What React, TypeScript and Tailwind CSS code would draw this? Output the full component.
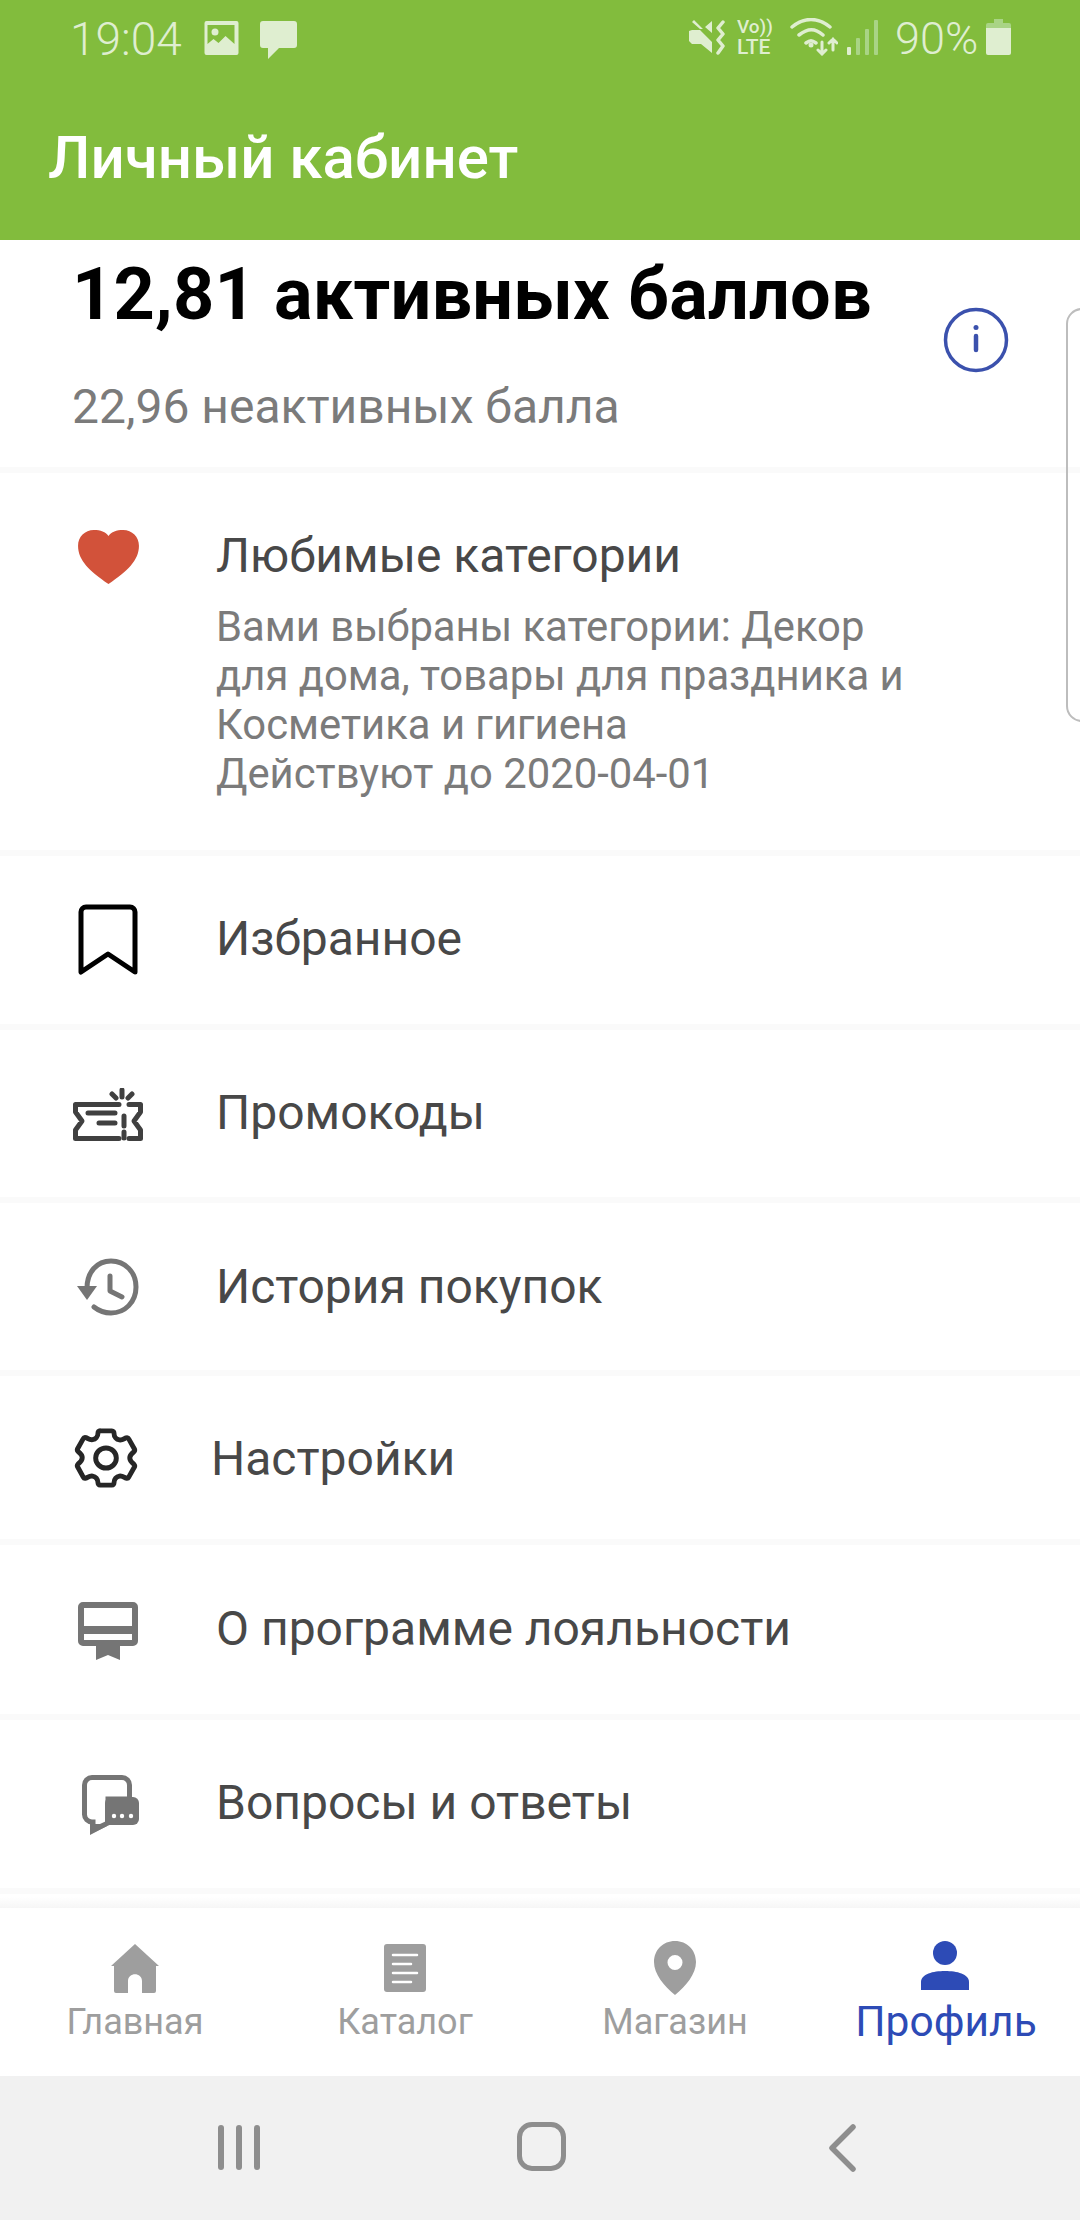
import React from 'react';

const F = '[font-family:Roboto,sans-serif]';

function Row({ icon, label, h, gap = 'pl-[216px]', text = '' }: { icon: React.ReactNode; label: string; h: string; gap?: string; text?: string }) {
  return (
    <div className={`relative flex items-center ${h} border-b-[6px] border-[#fafafa] ${gap}`}>
      <div className="absolute left-[70px] top-0 bottom-0 w-[76px] flex items-center justify-center">{icon}</div>
      <span className={`text-[48px] leading-none text-[#484848] ${text}`}>{label}</span>
    </div>
  );
}

function Tab({ label, icon, active }: { label: string; icon: React.ReactNode; active?: boolean }) {
  return (
    <div className="flex flex-col items-center pt-[36px]">
      <div className="h-[50px] flex items-center justify-center">{icon}</div>
      <div className={active ? 'mt-[4px] ml-[2px] text-[42.500px] leading-[48px] text-[#2d4bb6]' : 'mt-[5px] text-[36px] leading-[46px] text-[#9e9e9e]'}>{label}</div>
    </div>
  );
}

export default function App() {
  return (
    <div className={`relative w-[1080px] h-[2220px] bg-white overflow-hidden flex flex-col ${F}`}>
      <header className="h-[240px] bg-[#82bc3d] shrink-0 flex flex-col">
        <div className="h-[80px] relative text-[#dfeed0]">
          <span className="absolute left-[70px] top-[14px] text-[46px] leading-[50px] font-light">19:04</span>
          <svg className="absolute left-[204px] top-[21px]" width="35" height="34" viewBox="0 0 34 34">
            <path fillRule="evenodd" fill="#dfeed0" d="M2 0h30a2 2 0 0 1 2 2v30a2 2 0 0 1-2 2H2a2 2 0 0 1-2-2V2a2 2 0 0 1 2-2zM3 4v19l6-5 5 4 7-7 9 8V4z" />
            <circle cx="10.5" cy="11" r="3.5" fill="#dfeed0" />
          </svg>
          <svg className="absolute left-[260px] top-[21px]" width="37" height="38" viewBox="0 0 37 38">
            <path fill="#dfeed0" d="M3 0h31a3 3 0 0 1 3 3v21a3 3 0 0 1-3 3H19L8 38V27H3a3 3 0 0 1-3-3V3a3 3 0 0 1 3-3z" />
          </svg>
          <svg className="absolute left-[689px] top-[20px]" width="37" height="35" viewBox="0 0 37 35">
            <path fill="#dfeed0" d="M0 11l3-1h8l12 12v11l-11-9H3l-3-3zM3 2l2-2 9 9-3 0zM16 7l7-6v12z" />
            <path fill="none" stroke="#dfeed0" strokeWidth="3.500" strokeLinecap="round" strokeLinejoin="round" d="M34 2l-5 6 5 6-5 6 5 6-5 7" />
          </svg>
          <span className="absolute left-[737px] top-[17px] text-[19px] leading-[20px] font-medium">Vo))</span>
          <span className="absolute left-[737px] top-[36px] text-[21px] leading-[22px] font-medium">LTE</span>
          <svg className="absolute left-[790px] top-[18px]" width="48" height="38" viewBox="0 0 48 38" fill="none" stroke="#dfeed0" strokeWidth="3.500" strokeLinecap="round">
            <path d="M2 9C14-1 28-1 40 9M9 17c9-7 16-7 24 0M16 25c4-3 6-3 10 0" />
            <circle cx="21" cy="27" r="1.500" fill="#dfeed0" strokeWidth="2" />
            <path strokeWidth="3" d="M32 24v12M28 32l4 4 4-4M43 32V21M39 25l4-4 4 4" />
          </svg>
          <svg className="absolute left-[847px] top-[20px]" width="32" height="36" viewBox="0 0 32 36" fill="#a9d485">
            <rect x="0" y="27" width="4" height="8" rx="1" fill="#dfeed0" />
            <rect x="9" y="18" width="4" height="17" rx="1" />
            <rect x="18" y="9" width="4" height="26" rx="1" />
            <rect x="27" y="0" width="4" height="35" rx="1" />
          </svg>
          <span className="absolute left-[895px] top-[14px] text-[45px] leading-[50px] font-light">90%</span>
          <svg className="absolute left-[986px] top-[19px]" width="25" height="36" viewBox="0 0 25 36">
            <path fill="#a9d485" d="M8 0h9v4h6a2 2 0 0 1 2 2v4H0V6a2 2 0 0 1 2-2h6z" />
            <path fill="#dfeed0" d="M0 9h25v25a2 2 0 0 1-2 2H2a2 2 0 0 1-2-2z" />
          </svg>
        </div>
        <div className="pl-[48px] pt-[46px] text-[60px] leading-[64px] font-medium text-white">Личный кабинет</div>
      </header>

      <main className="flex-1 flex flex-col relative overflow-hidden">
        <section className="relative h-[233px] border-b-[6px] border-[#fafafa]">
          <div className="pl-[72px] pt-[15px] text-[72px] leading-[80px] font-bold text-black tracking-[0.2px]">12,81 активных баллов</div>
          <div className="pl-[72px] pt-[46px] text-[48px] leading-[52px] text-[#7b7b7b]">22,96 неактивных балла</div>
          <svg className="absolute left-[942px] top-[66px]" width="68" height="68" viewBox="0 0 68 68" fill="none" stroke="#3b51ad">
            <circle cx="34" cy="34" r="30.500" strokeWidth="3.500" />
            <circle cx="34" cy="21.500" r="2.500" fill="#3b51ad" stroke="none" />
            <path d="M34 30v14" strokeWidth="4.500" strokeLinecap="round" />
          </svg>
        </section>

        <section className="relative h-[383px] border-b-[6px] border-[#fafafa] pl-[216px] pt-[57px]">
          <svg className="absolute left-[78px] top-[57px]" width="61" height="55" viewBox="0 0 62 56">
            <path fill="#d2523a" d="M31 55C12 42 0 31 0 16 0 7 7 0 16 0c7 0 12 2 15 6 3-4 8-6 15-6 9 0 16 7 16 16 0 15-12 26-31 39z" />
          </svg>
          <div className="text-[48px] leading-[52px] text-[#484848]">Любимые категории</div>
          <div className="mt-[20px] text-[41.800px] leading-[49px] text-[#7b7b7b]">
            <div>Вами выбраны категории: Декор</div>
            <div>для дома, товары для праздника и</div>
            <div>Косметика и гигиена</div>
            <div>Действуют до 2020-04-01</div>
          </div>
        </section>

        <Row h="h-[174px]" text="-mt-[2px]" label="Избранное" icon={
          <svg width="60" height="72" viewBox="0 0 60 72" fill="none" stroke="#000" strokeWidth="5" strokeLinejoin="round">
            <path d="M8 3h44a5 5 0 0 1 5 5v60L30 50 3 68V8a5 5 0 0 1 5-5z" />
          </svg>
        } />
        <Row h="h-[173px]" text="-mt-[2px]" label="Промокоды" icon={
          <svg width="72" height="54" viewBox="0 0 72 54" className="mt-[2px]" fill="none" stroke="#404040" strokeWidth="5" strokeLinecap="round" strokeLinejoin="round">
            <path d="M47 16.500H3.500V24L10 33l-6.500 9v8.500H47M57 16.500h11.500V24L62 33l6.500 9v8.500H57" />
            <path d="M16 25h27M27 35h16M52 28v10M52 44v6" />
            <path d="M40 6l4 4M50 2v7M60 6l-4 4" />
          </svg>
        } />
        <Row h="h-[173px]" label="История покупок" icon={
          <svg width="62" height="58" viewBox="0 0 62 58" fill="none" stroke="#757575" strokeWidth="5" strokeLinecap="round" strokeLinejoin="round">
            <path d="M10 30C10 14 20 3 34 3c14 0 25 11 25 26S48 55 34 55c-6 0-12-2-17-6" />
            <path fill="#757575" stroke="none" d="M0 28h20L10 42z" />
            <path d="M33 18v15l12 6" />
          </svg>
        } />
        <Row h="h-[169px]" gap="pl-[211px]" text="mt-[3px]" label="Настройки" icon={
          <svg width="64" height="62" viewBox="0 0 24 24" className="-ml-[4px]" fill="none" stroke="#262626" strokeWidth="1.900" strokeLinejoin="round">
            <path d="M9.700 1.500h4.600c.5 0 .8.4.8.9 0 1.500 1 2.400 2.100 2.600 1 .2 1.900-.5 2.600-.8.4-.1.8 0 1 .4l2.200 3.900c.2.4.1.8-.2 1.100-.9.7-1.600 1.400-1.600 2.400s.7 1.700 1.600 2.400c.3.3.4.7.2 1.100l-2.200 3.900c-.2.4-.6.5-1 .4-.7-.3-1.600-1-2.600-.8-1.100.2-2.100 1.100-2.100 2.600 0 .5-.3.9-.8.9H9.700c-.5 0-.8-.4-.8-.9 0-1.500-1-2.400-2.100-2.600-1-.2-1.900.5-2.600.8-.4.1-.8 0-1-.4L1 15.400c-.2-.4-.1-.8.2-1.100.9-.7 1.600-1.400 1.600-2.400s-.7-1.700-1.600-2.400c-.3-.3-.4-.7-.2-1.100l2.200-3.900c.2-.4.6-.5 1-.4.7.3 1.600 1 2.600.8 1.100-.2 2.100-1.100 2.100-2.600 0-.5.3-.9.8-.9z" />
            <ellipse cx="12" cy="12" rx="4" ry="3.900" />
          </svg>
        } />
        <Row h="h-[175px]" text="-mt-[2px]" label="О программе лояльности" icon={
          <svg width="60" height="58" viewBox="0 0 60 58" className="mt-[2px]">
            <path fill="#757575" fillRule="evenodd" d="M5 0h50a5 5 0 0 1 5 5v34a5 5 0 0 1-5 5H42v14l-12-5-12 5V44H5a5 5 0 0 1-5-5V5a5 5 0 0 1 5-5zM6 6v18h48V6zM6 32v6h48v-6z" />
          </svg>
        } />
        <Row h="h-[174px]" text="-mt-[2px]" label="Вопросы и ответы" icon={
          <svg width="57" height="60" viewBox="0 0 57 60" className="ml-[4px] mt-[2px]">
            <path fill="none" stroke="#757575" strokeWidth="5" d="M10 2.500h30a7.500 7.500 0 0 1 7.500 7.500v14H26v24l-15 7v-8h-1a7.500 7.500 0 0 1-7.500-7.500V10A7.500 7.500 0 0 1 10 2.500z" />
            <path fill="#757575" d="M29 22h22a6 6 0 0 1 6 6v16a6 6 0 0 1-6 6H23V28a6 6 0 0 1 6-6z" />
            <path fill="#757575" d="M8 49h17v2L8 60z" />
            <circle cx="32" cy="41" r="2.200" fill="#fff" />
            <circle cx="40" cy="41" r="2.200" fill="#fff" />
            <circle cx="49" cy="41" r="2.200" fill="#fff" />
          </svg>
        } />
        <div className="absolute right-[-20px] top-[68px] w-[34px] h-[414px] border-2 border-[#bdbdbd] rounded-[16px]" />
      </main>

      <div className="absolute left-0 right-0 top-[1897px] h-[11px] bg-gradient-to-b from-white to-[#f6f6f6]" />

      <nav className="absolute left-0 right-0 top-[1908px] h-[168px] bg-white grid grid-cols-4">
        <Tab label="Главная" icon={
          <svg width="48" height="50" viewBox="0 0 48 50" fill="#9e9e9e"><path d="M24 0l24 22h-3v25a2 2 0 0 1-2 2H31V37c0-9-14-9-14 0v12H5a2 2 0 0 1-2-2V22H0z" /></svg>
        } />
        <Tab label="Каталог" icon={
          <svg width="42" height="50" viewBox="0 0 42 50"><rect width="42" height="48" rx="3" fill="#9e9e9e" /><path stroke="#fff" strokeWidth="2.500" strokeLinecap="round" d="M9 11h24M9 20h18M9 29h24M9 38h18" /></svg>
        } />
        <Tab label="Магазин" icon={
          <svg width="42" height="54" viewBox="0 0 42 54" className="-mt-[3px]"><path fill="#9e9e9e" fillRule="evenodd" d="M21 0c12 0 21 9 21 21 0 12-10 24-21 33C10 45 0 33 0 21 0 9 9 0 21 0zm0 14a7.500 7.500 0 1 0 0 15 7.500 7.500 0 0 0 0-15z" /></svg>
        } />
        <Tab active label="Профиль" icon={
          <svg width="48" height="50" viewBox="0 0 48 50" className="-mt-[6px]" fill="#2d4bb6"><circle cx="24" cy="12" r="12" /><path d="M0 49v-8c0-8 12-11 24-11s24 3 24 11v8z" /></svg>
        } />
      </nav>

      <footer className="absolute left-0 right-0 top-[2076px] h-[144px] bg-[#f1f1f1]">
        <div className="absolute left-[218px] top-[49px] flex gap-[12px]">
          <div className="w-[6px] h-[45px] rounded-full bg-[#8e8e8e]" />
          <div className="w-[6px] h-[45px] rounded-full bg-[#8e8e8e]" />
          <div className="w-[6px] h-[45px] rounded-full bg-[#8e8e8e]" />
        </div>
        <div className="absolute left-[517px] top-[46px] w-[49px] h-[49px] rounded-[15px] border-[5px] border-[#8e8e8e]" />
        <svg className="absolute left-[828px] top-[48px]" width="30" height="48" viewBox="0 0 30 48" fill="none" stroke="#8e8e8e" strokeWidth="5.500" strokeLinecap="round" strokeLinejoin="round">
          <path d="M25 3L4 24l21 21" />
        </svg>
      </footer>
    </div>
  );
}
